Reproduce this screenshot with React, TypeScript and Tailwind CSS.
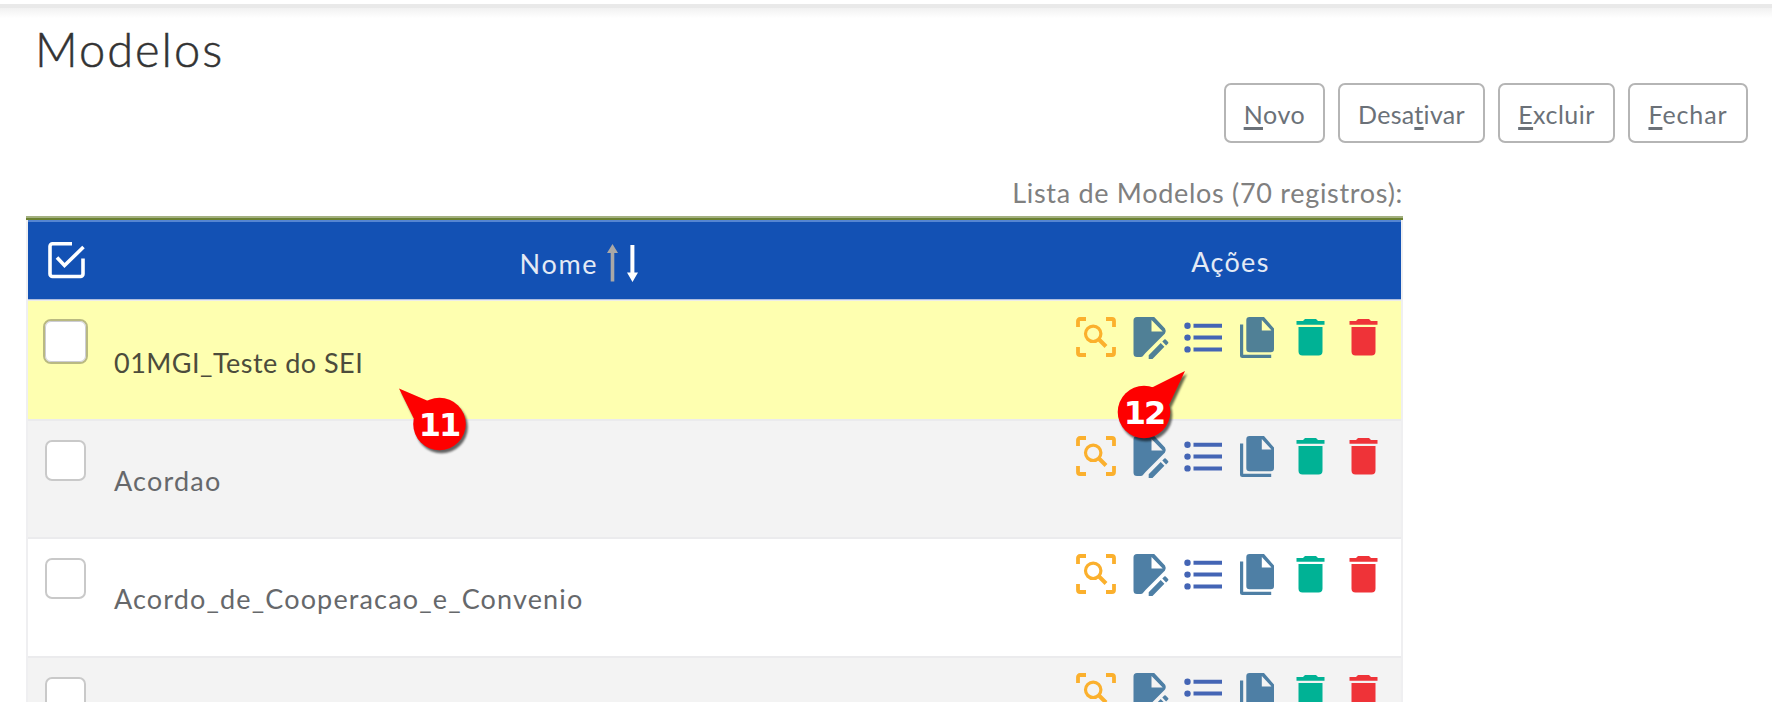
import React from "react";

type Row = { name: string; highlighted?: boolean; rowClass: string; nameClass: string; iconsClass: string };

const rows: Row[] = [
  { name: "01MGI_Teste do SEI", highlighted: true, rowClass: "h-[120px] bg-[#feffb0]", nameClass: "pt-[44px] text-[#4c4c3c] tracking-[0.48px]", iconsClass: "pt-[16px]" },
  { name: "Acordao", rowClass: "h-[118px] bg-[#f3f3f3]", nameClass: "pt-[42px] text-[#66686b] tracking-[1.2px]", iconsClass: "pt-[15px]" },
  { name: "Acordo_de_Cooperacao_e_Convenio", rowClass: "h-[119px] bg-white", nameClass: "pt-[42px] text-[#66686b] tracking-[1.15px]", iconsClass: "pt-[15px]" },
  { name: "", rowClass: "h-[118px] bg-[#f3f3f3]", nameClass: "", iconsClass: "pt-[15px]" },
];

const ScanIcon = () => (
  <svg width="40" height="40" viewBox="0 0 40 40" fill="none" stroke="#fbb02d">
    <path d="M2 10V4a2 2 0 0 1 2-2h6M30 2h6a2 2 0 0 1 2 2v6M38 30v6a2 2 0 0 1-2 2h-6M10 38H4a2 2 0 0 1-2-2v-6" strokeWidth="3.8" />
    <circle cx="17.2" cy="16.8" r="7.7" strokeWidth="3.2" />
    <path d="m22.5 22 7.5 7.5" strokeWidth="4" />
  </svg>
);

const EditIcon = ({ color }: { color: string }) => (
  <svg width="36" height="43" viewBox="0 0 36 43" fill={color}>
    <path fillRule="evenodd" d="M4 0h17.200L32 11.500q1.500 2.500 0 5L12.500 36 9.500 39.500 8 40H4a3.500 3.500 0 0 1-3.500-3.500v-33A3.500 3.500 0 0 1 4 0ZM18.500 3v11.500h11.200Z" />
    <path d="m15.700 38.300 12-12.200 3.700 3.700L19.500 42h-3.800ZM29.300 24.600l2-2q.7-.7 1.400 0l2.400 2.400q.7.7 0 1.400l-2 2Z" />
  </svg>
);

const ListIcon = () => (
  <svg width="38" height="31" viewBox="0 0 38 31" fill="#4465b5">
    <circle cx="3.500" cy="3.800" r="3.200" />
    <circle cx="3.500" cy="15.600" r="3.200" />
    <circle cx="3.500" cy="27.400" r="3.200" />
    <path d="M9.500 1.800H38v4H9.500ZM9.500 13.600H38v4H9.500ZM9.500 25.400H38v4H9.500Z" />
  </svg>
);

const CopyIcon = ({ color }: { color: string }) => (
  <svg width="36" height="43" viewBox="0 0 36 43" fill={color}>
    <path fillRule="evenodd" d="M10.500 0H25l10 11.500V32a3.200 3.200 0 0 1-3.200 3.200H10.500A3.200 3.200 0 0 1 7.300 32V3.200A3.200 3.200 0 0 1 10.500 0ZM22.800 3v10.500h9.700Z" />
    <path d="M1 7.500h3.200v30.300h28V41H3.500A2.500 2.500 0 0 1 1 38.500Z" />
  </svg>
);

const TrashIcon = ({ color }: { color: string }) => (
  <svg width="29" height="37" viewBox="0 0 29 37" fill={color}>
    <path d="M9 0h11l2 2h6.500v3.700H.5V2H7ZM2.500 8h24v24.500a4 4 0 0 1-4 4h-16a4 4 0 0 1-4-4Z" />
  </svg>
);

const HeaderCheck = () => (
  <svg width="37" height="38" viewBox="0 0 37 38" fill="none" stroke="#fff" strokeWidth="3.600">
    <path d="M24 2.800H4.500a2.500 2.500 0 0 0-2.500 2.500V33a2.500 2.500 0 0 0 2.500 2.500h28A2.500 2.500 0 0 0 35 33V17.500" />
    <path d="m9 16.500 7.500 8L35.500 6" />
  </svg>
);

const SortArrows = () => (
  <svg width="31" height="38" viewBox="0 0 31 38">
    <path fill="#aaa8a6" d="M5.500 0 11 9H7.300v28.500H3.700V9H0Z" />
    <path fill="#fff" d="M23.400 1h4v27.500H31L25.500 38 20 28.500h3.400Z" />
  </svg>
);

const buttons = [
  { pre: "", key: "N", post: "ovo", cls: "w-[101px] tracking-[0.6px]" },
  { pre: "Desa", key: "t", post: "ivar", cls: "w-[147px] tracking-[0.3px]" },
  { pre: "", key: "E", post: "xcluir", cls: "w-[117px] tracking-[0.5px]" },
  { pre: "", key: "F", post: "echar", cls: "w-[120px] tracking-[0.9px]" },
];

const CalloutEleven = () => (
  <div className="relative h-[68px] w-[72px]">
    <svg width="72" height="68" viewBox="0 0 72 68" className="absolute inset-0 overflow-visible drop-shadow-[2px_3px_1px_rgba(0,0,0,0.6)]">
      <g fill="#fe0000">
        <circle cx="40.500" cy="40" r="26.300" />
        <path d="M0 4.500 28 16.500 40 18 30 42 14.500 34Z" />
      </g>
    </svg>
    <span className="absolute top-[23px] left-[13px] w-[54px] text-center font-['DejaVu_Sans',sans-serif] text-[32px] leading-[36px] font-bold tracking-[-2px] text-white">11</span>
  </div>
);

const CalloutTwelve = () => (
  <div className="relative h-[68px] w-[72px]">
    <svg width="72" height="68" viewBox="0 0 72 68" className="absolute inset-0 overflow-visible drop-shadow-[2px_3px_1px_rgba(0,0,0,0.6)]">
      <g fill="#fe0000">
        <circle cx="27" cy="41" r="26.300" />
        <path d="M68 0 36 16 27 18 35 42 52.500 33Z" />
      </g>
    </svg>
    <span className="absolute top-[24px] left-0 w-[54px] text-center font-['DejaVu_Sans',sans-serif] text-[32px] leading-[36px] font-bold tracking-[-2px] text-white">12</span>
  </div>
);

export default function App() {
  return (
    <div className="relative h-[702px] w-[1772px] overflow-hidden bg-white font-['Lato',sans-serif] [font-variant-ligatures:none]">
      <div className="mt-1 h-[4px] bg-[#e9e9e9]" />
      <div className="h-[10px] bg-gradient-to-b from-[#f1f1f1] to-white" />
      <h1 className="mt-[3px] ml-[35px] h-[57px] text-[47px] leading-[56px] font-light tracking-[2px] text-[#333] [-webkit-text-stroke:0.5px_#333]">Modelos</h1>
      <div className="mt-[5px] flex h-[60px] justify-end gap-[13px] pr-[24px]">
        {buttons.map((b) => (
          <button key={b.key} className={`h-[60px] rounded-[7px] border-2 border-[#b5b5b5] bg-white pt-[4px] text-[25px] text-[#6b7178] ${b.cls}`}>
            {b.pre}
            <span className="underline decoration-[3px] underline-offset-[3px]">{b.key}</span>
            {b.post}
          </button>
        ))}
      </div>
      <div className="mt-[30px] h-[43px] w-[1403px] text-right text-[27px] leading-[40px] text-[#808080]">
        <span className="tracking-[0.7px]">Lista de Modelos (70 registros):</span>
      </div>
      <div className="ml-[26px] w-[1377px] border-x-2 border-[#efeff1]">
        <div className="-mx-[2px] h-[2px] bg-[#a3b080]" />
        <div className="-mx-[2px] h-[2px] bg-[#6c8231]" />
        <div className="flex h-[79px] items-center border-t-2 border-[#5585d2] bg-[#1351b4] text-[27px] text-[#e4eaf5]">
          <div className="flex w-[73px] items-center pb-[2px] pl-[20px]"><HeaderCheck /></div>
          <div className="flex w-[956px] items-center justify-center gap-[8px] pt-[4px] pr-[1px]">
            <span className="w-[79px] pt-[3px] tracking-[1.7px]">Nome</span>
            <SortArrows />
          </div>
          <div className="flex-1 pt-[3px] pl-[3px] text-center tracking-[1.3px]">Ações</div>
        </div>
        <div className="h-px bg-[#b0bedd]" />
        <div className="h-px bg-[#ececec]" />
        {rows.map((r, i) => {
          const doc = r.highlighted ? "#508096" : "#4e7fa5";
          return (
            <div key={i} className={`flex items-start border-b-2 border-[#ebebed] ${r.rowClass}`}>
              <div className="flex w-[86px] pt-[18px] pl-[15px]">
                {r.highlighted ? (
                  <div className="h-[45px] w-[45px] rounded-[8px] border-2 border-[#b9b982] bg-white outline-1 -outline-offset-3 outline-[#ccccd4]" />
                ) : (
                  <div className="mt-[1px] ml-[2px] h-[41px] w-[41px] rounded-[7px] border-2 border-[#c9c9c9] bg-white" />
                )}
              </div>
              <div className={`w-[962px] text-[27px] leading-[36px] whitespace-nowrap ${r.nameClass}`}>{r.name}</div>
              <div className={`flex items-start ${r.iconsClass}`}>
                <div className="w-[57px]"><ScanIcon /></div>
                <div className="w-[51px]"><EditIcon color={doc} /></div>
                <div className="w-[55px] pt-[5px]"><ListIcon /></div>
                <div className="w-[57px]"><CopyIcon color={doc} /></div>
                <div className="w-[53px] pt-[2px]"><TrashIcon color="#00b295" /></div>
                <div className="pt-[2px]"><TrashIcon color="#ef3338" /></div>
              </div>
            </div>
          );
        })}
      </div>
      <div className="absolute top-[384px] left-[399px]"><CalloutEleven /></div>
      <div className="absolute top-[371px] left-[1117px]"><CalloutTwelve /></div>
    </div>
  );
}
